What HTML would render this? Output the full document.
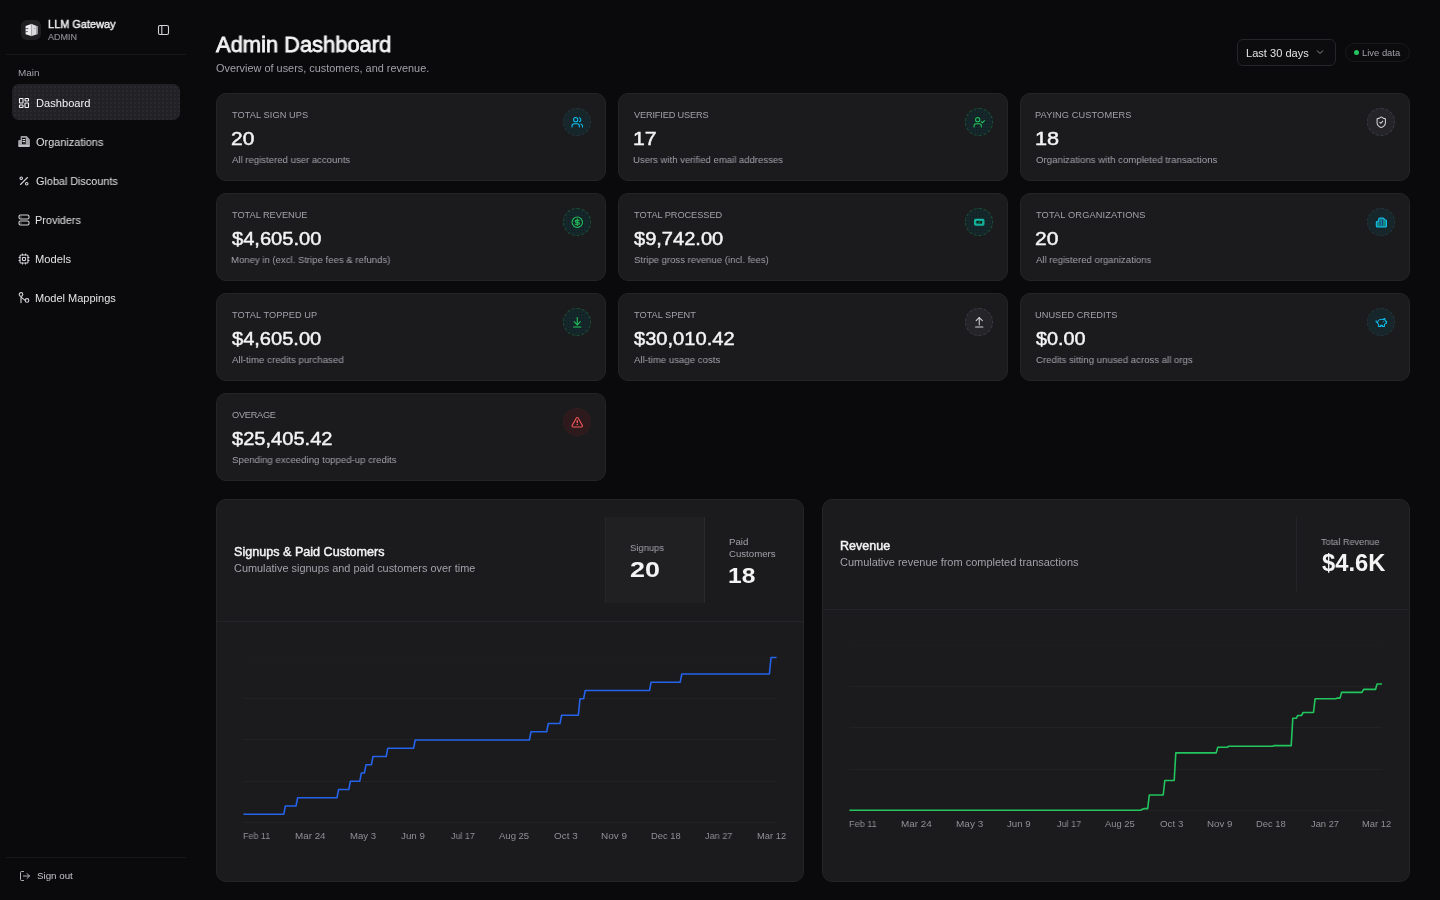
<!DOCTYPE html>
<html><head><meta charset="utf-8"><title>Admin Dashboard</title>
<style>
*{box-sizing:border-box;margin:0;padding:0}
html,body{width:1440px;height:900px;overflow:hidden;background:#0a0a0c;font-family:"Liberation Sans",sans-serif}
.t{position:absolute;white-space:nowrap;line-height:1;transform-origin:0 0;will-change:transform}
.abs{position:absolute}
.card{position:absolute;width:390px;height:88px;background:#1b1b1d;border:1px solid #242427;border-radius:10px}
.ic{position:absolute;width:28px;height:28px;border-radius:50%;display:flex;align-items:center;justify-content:center}
.ic svg{width:12.5px;height:12.5px}
.ic.teal{background:#16262a;border:1px dashed #27353c}
.ic.green{background-color:#15272a;background-image:radial-gradient(circle,#0f1c1e 0.6px,transparent 0.8px);background-size:3px 3px;border:1px dashed #1c5234}
.ic.gray{background:#252529;border:1px dashed #363c4a}
.ic.red{background:#2e1a1d;border:1px dashed #33201f}
.chart{position:absolute;background:#1b1b1d;border:1px solid #242427;border-radius:10px;overflow:hidden}
</style></head><body>
<!-- sidebar -->
<div class="abs" style="left:21px;top:20px;width:20px;height:20px;border-radius:6px;background:#1f1f22"></div>
<svg class="abs" style="left:24px;top:22px" width="16" height="16" viewBox="24 22 16 16">
<path d="M25.6 26.0 L31.2 23.9 L31.2 36.1 L25.6 34.3Z" fill="#ededef"/>
<path d="M31.9 24.1 L37.7 26.4 L37.7 33.9 L31.9 36.1Z" fill="#dcdce0"/>
<path d="M36.2 25.8 L37.7 26.4 L37.7 33.9 L36.2 34.5Z" fill="#8e8e94"/>
<rect x="30.9" y="23.9" width="1.2" height="12.2" fill="#a9a9ae"/>
<path d="M25.6 28.6h2.8M25.6 31.6h2.2" stroke="#3a3a3f" stroke-width="0.8"/>
<path d="M34.2 28.4h1" stroke="#6a6a70" stroke-width="0.8"/>
</svg>
<svg class="abs" style="left:157px;top:24px" width="13" height="12" viewBox="0 0 13 12"><rect x="1.5" y="1.5" width="10" height="9" rx="1.5" fill="none" stroke="#d4d4d8" stroke-width="1.1"/><path d="M4.8 1.5v9" stroke="#d4d4d8" stroke-width="1.1"/></svg>
<div class="abs" style="left:6px;top:54px;width:180px;height:1px;background:#18181b"></div>
<div class="abs" style="left:12px;top:84px;width:168px;height:36px;border-radius:7px;background:#222226;background-image:radial-gradient(circle,#2a2a2e 0.7px,transparent 0.9px);background-size:4px 4px;background-position:1px 1px"></div>
<div class="abs" style="left:6px;top:857px;width:180px;height:1px;background:#18181b"></div>
<svg class="abs" style="left:18px;top:96.5px" width="12" height="12" viewBox="0 0 24 24" fill="none" stroke="#f4f4f5" stroke-width="2.2" stroke-linecap="round" stroke-linejoin="round"><rect width="7" height="9" x="3" y="3" rx="1"/><rect width="7" height="5" x="14" y="3" rx="1"/><rect width="7" height="9" x="14" y="12" rx="1"/><rect width="7" height="5" x="3" y="16" rx="1"/></svg>
<svg class="abs" style="left:14px;top:130px" width="20" height="20" viewBox="14 130 20 20"><path d="M18.2 141.2 Q18.2 140.1 19.3 140.1 L20.6 140.1 L20.6 137.2 Q20.6 136 21.8 136 L26.6 136 L29.3 138.8 Q29.9 139.4 29.9 140.3 L29.9 145.8 Q29.9 147 28.7 147 L19.4 147 Q18.2 147 18.2 145.8Z" fill="#a3a3a9"/><rect x="22" y="137.7" width="3.7" height="6.5" fill="#0a0a0c"/><path d="M22.5 139.6h2.7M22.5 141.6h2.7" stroke="#f4f4f5" stroke-width="1"/><path d="M23.6 143.2h0.8" stroke="#a3a3a9" stroke-width="1"/><path d="M18.6 145.9h10.9" stroke="#d0d0d5" stroke-width="1.2"/></svg>
<svg class="abs" style="left:18px;top:174.5px" width="12" height="12" viewBox="0 0 24 24" fill="none" stroke="#d4d4d8" stroke-width="2.2" stroke-linecap="round" stroke-linejoin="round"><line x1="19" x2="5" y1="5" y2="19"/><circle cx="6.5" cy="6.5" r="2.5"/><circle cx="17.5" cy="17.5" r="2.5"/></svg>
<svg class="abs" style="left:18px;top:213.5px" width="12" height="12" viewBox="0 0 24 24" fill="none" stroke="#d4d4d8" stroke-width="2.2" stroke-linecap="round" stroke-linejoin="round"><rect width="20" height="8" x="2" y="2" rx="3"/><rect width="20" height="8" x="2" y="14" rx="3"/><path d="M6 6h.01M6 18h.01"/></svg>
<svg class="abs" style="left:18px;top:252.5px" width="12" height="12" viewBox="0 0 24 24" fill="none" stroke="#d4d4d8" stroke-width="2.2" stroke-linecap="round" stroke-linejoin="round"><rect width="16" height="16" x="4" y="4" rx="2"/><rect width="6" height="6" x="9" y="9" rx="1"/><path d="M15 2v2M15 20v2M2 15h2M2 9h2M20 15h2M20 9h2M9 2v2M9 20v2"/></svg>
<svg class="abs" style="left:18px;top:291px" width="12" height="14" viewBox="0 0 12 14" fill="none" stroke="#d4d4d8" stroke-width="1.1" stroke-linecap="round"><circle cx="3" cy="3.4" r="1.8"/><path d="M3 5.2V11.6M3.6 6.6 L7.3 9.4"/><circle cx="9" cy="9.4" r="1.8"/></svg>
<svg class="abs" style="left:19px;top:870px" width="12" height="12" viewBox="0 0 24 24" fill="none" stroke="#b4b4ba" stroke-width="2.0" stroke-linecap="round" stroke-linejoin="round"><path d="M9 21H5a2 2 0 0 1-2-2V5a2 2 0 0 1 2-2h4"/><polyline points="16 17 21 12 16 7"/><line x1="21" x2="9" y1="12" y2="12"/></svg>
<div class="card" style="left:216px;top:93px"></div>
<div class="ic teal" style="left:563px;top:108px"><svg viewBox="0 0 24 24" fill="none" stroke="#10c2f4" stroke-width="2" stroke-linecap="round" stroke-linejoin="round"><path d="M16 21v-2a4 4 0 0 0-4-4H6a4 4 0 0 0-4 4v2"/><circle cx="9" cy="7" r="4"/><path d="M22 21v-2a4 4 0 0 0-3-3.87"/><path d="M16 3.13a4 4 0 0 1 0 7.75"/></svg></div>
<div class="card" style="left:618px;top:93px"></div>
<div class="ic green" style="left:965px;top:108px"><svg viewBox="0 0 24 24" fill="none" stroke="#22c55e" stroke-width="2" stroke-linecap="round" stroke-linejoin="round"><path d="M16 21v-2a4 4 0 0 0-4-4H6a4 4 0 0 0-4 4v2"/><circle cx="9" cy="7" r="4"/><polyline points="16 11 18 13 22 9"/></svg></div>
<div class="card" style="left:1020px;top:93px"></div>
<div class="ic gray" style="left:1367px;top:108px"><svg viewBox="0 0 24 24" fill="none" stroke="#d4d4d8" stroke-width="2" stroke-linecap="round" stroke-linejoin="round"><path d="M20 13c0 5-3.5 7.5-7.66 8.95a1 1 0 0 1-.67-.01C7.5 20.5 4 18 4 13V6a1 1 0 0 1 1-1c2 0 4.5-1.2 6.24-2.72a1.17 1.17 0 0 1 1.52 0C14.51 3.81 17 5 19 5a1 1 0 0 1 1 1z"/><path d="m9 12 2 2 4-4"/></svg></div>
<div class="card" style="left:216px;top:193px"></div>
<div class="ic green" style="left:563px;top:208px"><svg viewBox="0 0 24 24" fill="none" stroke="#22c55e" stroke-width="2" stroke-linecap="round" stroke-linejoin="round"><circle cx="12" cy="12" r="10"/><path d="M16 8h-6a2 2 0 1 0 0 4h4a2 2 0 1 1 0 4H8"/><path d="M12 18V6"/></svg></div>
<div class="card" style="left:618px;top:193px"></div>
<div class="ic green" style="left:965px;top:208px"><svg viewBox="0 0 24 24" fill="none" stroke="#14b8a6" stroke-width="2" stroke-linecap="round" stroke-linejoin="round"><rect width="18" height="11" x="3" y="6.5" rx="2" fill="#13a596" stroke="#14b8a6" stroke-width="2"/><rect width="11" height="5" x="6.5" y="9.5" fill="#0c1a18" stroke="none"/><path d="M10.5 13.5l3-3" stroke="#22c55e" stroke-width="1.5"/><path d="M5 8.5h.01M19 15.5h.01M5 15.5h.01" stroke="#22c55e" stroke-width="2"/></svg></div>
<div class="card" style="left:1020px;top:193px"></div>
<div class="ic teal" style="left:1367px;top:208px"><svg viewBox="0 0 24 24" fill="none" stroke="#10c2f4" stroke-width="2" stroke-linecap="round" stroke-linejoin="round"><path d="M2.5 12a2 2 0 0 1 2-2H7V6a2 2 0 0 1 2-2h7l4 3.5h.5a1.5 1.5 0 0 1 1.5 1.5V19a2 2 0 0 1-2 2H4.5a2 2 0 0 1-2-2z" fill="#138a84"/><path d="M10 7.5v10M14 7.5v10" stroke="#1e3a8a" stroke-width="2.5"/><path d="M11.8 8v9" stroke="#14b8a6" stroke-width="1.5"/></svg></div>
<div class="card" style="left:216px;top:293px"></div>
<div class="ic green" style="left:563px;top:308px"><svg viewBox="0 0 24 24" fill="none" stroke="#22c55e" stroke-width="2" stroke-linecap="round" stroke-linejoin="round"><path d="M12 17V3"/><path d="m6 11 6 6 6-6"/><path d="M19 21H5"/></svg></div>
<div class="card" style="left:618px;top:293px"></div>
<div class="ic gray" style="left:965px;top:308px"><svg viewBox="0 0 24 24" fill="none" stroke="#d4d4d8" stroke-width="2" stroke-linecap="round" stroke-linejoin="round"><path d="m18 9-6-6-6 6"/><path d="M12 3v14"/><path d="M5 21h14"/></svg></div>
<div class="card" style="left:1020px;top:293px"></div>
<div class="ic teal" style="left:1367px;top:308px"><svg viewBox="0 0 24 24" fill="none" stroke="#10c2f4" stroke-width="2" stroke-linecap="round" stroke-linejoin="round"><path d="M19 5c-1.5 0-2.8 1.4-3 2-3.5-1.5-11-.3-11 5 0 1.8 0 3 2 4.5V20h4v-2h3v2h4v-4c1-.5 1.7-1 2-2h2v-4h-2c0-1-.5-1.5-1-2V5z"/><path d="M2 9v1c0 1.1.9 2 2 2h1"/><path d="M16 11h.01"/></svg></div>
<div class="card" style="left:216px;top:393px"></div>
<div class="ic red" style="left:563px;top:408px"><svg viewBox="0 0 24 24" fill="none" stroke="#f0585c" stroke-width="2" stroke-linecap="round" stroke-linejoin="round"><path d="m21.73 18-8-14a2 2 0 0 0-3.48 0l-8 14A2 2 0 0 0 4 21h16a2 2 0 0 0 1.73-3"/><path d="M12 9v3.5" stroke-width="2.8"/><path d="M12 16.5h.01" stroke-width="2.8"/></svg></div>
<div class="chart" style="left:216px;top:499px;width:588px;height:383px"></div>
<div class="abs" style="left:217px;top:621px;width:586px;height:1px;background:#252529"></div>
<div class="abs" style="left:605px;top:517px;width:100px;height:86px;background:#202023;border-left:1px solid #262629;border-right:1px solid #29292c"></div>
<div class="chart" style="left:822px;top:499px;width:588px;height:383px"></div>
<div class="abs" style="left:823px;top:609px;width:586px;height:1px;background:#252529"></div>
<div class="abs" style="left:1296px;top:517px;width:1px;height:74px;background:#252529"></div>
<svg class="abs" style="left:0;top:0" width="1440" height="900"><g stroke="#222225" stroke-width="1"><line x1="243" x2="776.6" y1="657.5" y2="657.5" stroke="#1d1d20"/><line x1="243" x2="776.6" y1="698.5" y2="698.5"/><line x1="243" x2="776.6" y1="739.5" y2="739.5"/><line x1="243" x2="776.6" y1="781.5" y2="781.5"/><line x1="243" x2="776.6" y1="822.5" y2="822.5"/><line x1="849.4" x2="1382.4" y1="645.5" y2="645.5" stroke="#1d1d20"/><line x1="849.4" x2="1382.4" y1="686.5" y2="686.5"/><line x1="849.4" x2="1382.4" y1="727.5" y2="727.5"/><line x1="849.4" x2="1382.4" y1="769.5" y2="769.5"/><line x1="849.4" x2="1382.4" y1="810.5" y2="810.5"/></g><path d="M243.4,814.2 L283.8,814.2 L285.4,806.0 L296.0,806.0 L297.6,797.8 L337.0,797.8 L338.6,789.5 L348.8,789.5 L350.4,781.2 L359.8,781.2 L361.4,773.0 L364.4,773.0 L366.0,764.8 L371.4,764.8 L373.0,756.5 L386.2,756.5 L387.8,748.2 L413.6,748.2 L415.2,740.0 L529.4,740.0 L531.0,731.8 L546.7,731.8 L548.3,723.5 L560.0,723.5 L561.6,715.2 L578.4,715.2 L580.0,698.8 L583.6,698.8 L585.2,690.5 L649.5,690.5 L651.1,682.2 L680.2,682.2 L681.8,674.0 L769.4,674.0 L771.0,657.5 L776.6,657.5" fill="none" stroke="#2563eb" stroke-width="1.6" stroke-linejoin="round"/><path d="M849.4,810.3 L1140.7,810.3 L1142.3,809.3 L1142.7,809.3 L1144.3,808.6 L1147.7,808.6 L1149.3,795.0 L1163.2,795.0 L1164.8,780.5 L1174.2,780.5 L1175.8,752.9 L1216.2,752.9 L1217.8,747.2 L1227.2,747.2 L1228.8,746.3 L1272.7,746.3 L1274.3,745.6 L1291.2,745.6 L1292.8,718.3 L1296.2,718.3 L1297.8,715.5 L1301.5,715.5 L1303.1,712.5 L1313.5,712.5 L1315.1,698.8 L1335.7,698.8 L1337.3,698.1 L1340.0,698.1 L1341.6,692.4 L1362.0,692.4 L1363.6,689.4 L1375.5,689.4 L1377.1,684.0 L1382.0,684.0" fill="none" stroke="#22c55e" stroke-width="1.6" stroke-linejoin="round"/></svg>
<!-- header controls -->
<div class="abs" style="left:1237px;top:39px;width:99px;height:27px;border:1px solid #25252a;border-radius:6px;background:#0c0c0e"></div>
<svg class="abs" style="left:1315px;top:48px" width="10" height="8" viewBox="0 0 10 8"><path d="M2 2.5l3 3 3-3" fill="none" stroke="#8f8f96" stroke-width="1"/></svg>
<div class="abs" style="left:1345px;top:43px;width:65px;height:19px;border:1px solid #19191c;border-radius:10px;background:#0b0b0d"></div>
<div class="abs" style="left:1354px;top:50px;width:5px;height:5px;border-radius:50%;background:#22c55e"></div>
<div class="t" style="left:47.84px;top:19px;font-size:11.17px;font-weight:400;color:#f4f4f5;transform:scaleX(0.9815);-webkit-text-stroke:0.40px #f4f4f5">LLM Gateway</div>
<div class="t" style="left:48.00px;top:33px;font-size:8.38px;font-weight:400;color:#85858c;transform:scaleX(1.0715);-webkit-text-stroke:0.21px #85858c">ADMIN</div>
<div class="t" style="left:17.72px;top:69px;font-size:8.94px;font-weight:400;color:#a1a1aa;transform:scaleX(1.1115)">Main</div>
<div class="t" style="left:35.63px;top:98px;font-size:11.03px;font-weight:400;color:#f4f4f5;transform:scaleX(1.0096)">Dashboard</div>
<div class="t" style="left:35.79px;top:137px;font-size:11.03px;font-weight:400;color:#e4e4e7;transform:scaleX(0.9909)">Organizations</div>
<div class="t" style="left:35.79px;top:176px;font-size:11.03px;font-weight:400;color:#e4e4e7;transform:scaleX(0.9813)">Global Discounts</div>
<div class="t" style="left:35.45px;top:215px;font-size:11.03px;font-weight:400;color:#e4e4e7;transform:scaleX(0.9869)">Providers</div>
<div class="t" style="left:35.43px;top:254px;font-size:11.03px;font-weight:400;color:#e4e4e7;transform:scaleX(1.0128)">Models</div>
<div class="t" style="left:35.44px;top:293px;font-size:11.03px;font-weight:400;color:#e4e4e7;transform:scaleX(0.9994)">Model Mappings</div>
<div class="t" style="left:37.20px;top:871px;font-size:9.78px;font-weight:400;color:#c4c4c9;transform:scaleX(0.9971)">Sign out</div>
<div class="t" style="left:216.25px;top:34px;font-size:22.35px;font-weight:400;color:#f4f4f5;transform:scaleX(0.9794);-webkit-text-stroke:0.80px #f4f4f5">Admin Dashboard</div>
<div class="t" style="left:215.74px;top:63px;font-size:10.75px;font-weight:400;color:#a1a1aa;transform:scaleX(1.0140)">Overview of users, customers, and revenue.</div>
<div class="t" style="left:1245.83px;top:49px;font-size:10.34px;font-weight:400;color:#e4e4e7;transform:scaleX(1.0718)">Last 30 days</div>
<div class="t" style="left:1361.66px;top:49px;font-size:8.94px;font-weight:400;color:#a1a1aa;transform:scaleX(1.0551)">Live data</div>
<div class="t" style="left:234.31px;top:547px;font-size:11.87px;font-weight:400;color:#f4f4f5;transform:scaleX(1.0615);-webkit-text-stroke:0.43px #f4f4f5">Signups &amp; Paid Customers</div>
<div class="t" style="left:234.19px;top:563px;font-size:10.61px;font-weight:400;color:#a1a1aa;transform:scaleX(1.0283)">Cumulative signups and paid customers over time</div>
<div class="t" style="left:630.21px;top:543px;font-size:9.64px;font-weight:400;color:#a1a1aa;transform:scaleX(0.9789)">Signups</div>
<div class="t" style="left:629.66px;top:559px;font-size:22.35px;font-weight:700;color:#f4f4f5;transform:scaleX(1.2042)">20</div>
<div class="t" style="left:728.56px;top:537px;font-size:9.64px;font-weight:400;color:#a1a1aa;transform:scaleX(0.9837)">Paid</div>
<div class="t" style="left:728.85px;top:549px;font-size:9.64px;font-weight:400;color:#a1a1aa;transform:scaleX(0.9970)">Customers</div>
<div class="t" style="left:727.76px;top:565px;font-size:22.35px;font-weight:700;color:#f4f4f5;transform:scaleX(1.1003)">18</div>
<div class="t" style="left:839.72px;top:541px;font-size:11.87px;font-weight:400;color:#f4f4f5;transform:scaleX(1.0561);-webkit-text-stroke:0.43px #f4f4f5">Revenue</div>
<div class="t" style="left:840.19px;top:557px;font-size:10.61px;font-weight:400;color:#a1a1aa;transform:scaleX(1.0346)">Cumulative revenue from completed transactions</div>
<div class="t" style="left:1321.36px;top:537px;font-size:9.64px;font-weight:400;color:#a1a1aa;transform:scaleX(0.9514)">Total Revenue</div>
<div class="t" style="left:1321.50px;top:552px;font-size:23.04px;font-weight:700;color:#f4f4f5;transform:scaleX(1.0307)">$4.6K</div>
<div class="t" style="left:231.86px;top:111px;font-size:9.22px;letter-spacing:0.082px;font-weight:400;color:#a1a1aa">TOTAL SIGN UPS</div>
<div class="t" style="left:231.02px;top:130px;font-size:18.02px;font-weight:400;color:#f4f4f5;transform:scaleX(1.1629);-webkit-text-stroke:0.45px #f4f4f5">20</div>
<div class="t" style="left:232.00px;top:155px;font-size:9.78px;font-weight:400;color:#a1a1aa;transform:scaleX(0.9806)">All registered user accounts</div>
<div class="t" style="left:634.00px;top:111px;font-size:9.22px;letter-spacing:-0.165px;font-weight:400;color:#a1a1aa">VERIFIED USERS</div>
<div class="t" style="left:632.67px;top:130px;font-size:18.02px;font-weight:400;color:#f4f4f5;transform:scaleX(1.1769);-webkit-text-stroke:0.45px #f4f4f5">17</div>
<div class="t" style="left:633.40px;top:155px;font-size:9.78px;font-weight:400;color:#a1a1aa;transform:scaleX(0.9761)">Users with verified email addresses</div>
<div class="t" style="left:1035.28px;top:111px;font-size:9.22px;letter-spacing:0.104px;font-weight:400;color:#a1a1aa">PAYING CUSTOMERS</div>
<div class="t" style="left:1034.64px;top:130px;font-size:18.02px;font-weight:400;color:#f4f4f5;transform:scaleX(1.2044);-webkit-text-stroke:0.45px #f4f4f5">18</div>
<div class="t" style="left:1035.55px;top:155px;font-size:9.78px;font-weight:400;color:#a1a1aa;transform:scaleX(0.9885)">Organizations with completed transactions</div>
<div class="t" style="left:231.86px;top:211px;font-size:9.22px;letter-spacing:-0.017px;font-weight:400;color:#a1a1aa">TOTAL REVENUE</div>
<div class="t" style="left:232.00px;top:230px;font-size:18.02px;font-weight:400;color:#f4f4f5;transform:scaleX(1.1154);-webkit-text-stroke:0.45px #f4f4f5">$4,605.00</div>
<div class="t" style="left:231.25px;top:255px;font-size:9.78px;font-weight:400;color:#a1a1aa;transform:scaleX(0.9787)">Money in (excl. Stripe fees &amp; refunds)</div>
<div class="t" style="left:633.86px;top:211px;font-size:9.22px;letter-spacing:-0.060px;font-weight:400;color:#a1a1aa">TOTAL PROCESSED</div>
<div class="t" style="left:634.00px;top:230px;font-size:18.02px;font-weight:400;color:#f4f4f5;transform:scaleX(1.1129);-webkit-text-stroke:0.45px #f4f4f5">$9,742.00</div>
<div class="t" style="left:633.70px;top:255px;font-size:9.78px;font-weight:400;color:#a1a1aa;transform:scaleX(0.9781)">Stripe gross revenue (incl. fees)</div>
<div class="t" style="left:1035.86px;top:211px;font-size:9.22px;letter-spacing:0.155px;font-weight:400;color:#a1a1aa">TOTAL ORGANIZATIONS</div>
<div class="t" style="left:1035.01px;top:230px;font-size:18.02px;font-weight:400;color:#f4f4f5;transform:scaleX(1.1682);-webkit-text-stroke:0.45px #f4f4f5">20</div>
<div class="t" style="left:1036.00px;top:255px;font-size:9.78px;font-weight:400;color:#a1a1aa;transform:scaleX(0.9786)">All registered organizations</div>
<div class="t" style="left:231.86px;top:311px;font-size:9.22px;letter-spacing:0.087px;font-weight:400;color:#a1a1aa">TOTAL TOPPED UP</div>
<div class="t" style="left:232.00px;top:330px;font-size:18.02px;font-weight:400;color:#f4f4f5;transform:scaleX(1.1129);-webkit-text-stroke:0.45px #f4f4f5">$4,605.00</div>
<div class="t" style="left:232.00px;top:355px;font-size:9.78px;font-weight:400;color:#a1a1aa;transform:scaleX(0.9944)">All-time credits purchased</div>
<div class="t" style="left:633.86px;top:311px;font-size:9.22px;letter-spacing:0.005px;font-weight:400;color:#a1a1aa">TOTAL SPENT</div>
<div class="t" style="left:634.00px;top:330px;font-size:18.02px;font-weight:400;color:#f4f4f5;transform:scaleX(1.1158);-webkit-text-stroke:0.45px #f4f4f5">$30,010.42</div>
<div class="t" style="left:634.00px;top:355px;font-size:9.78px;font-weight:400;color:#a1a1aa;transform:scaleX(0.9877)">All-time usage costs</div>
<div class="t" style="left:1035.42px;top:311px;font-size:9.22px;letter-spacing:0.040px;font-weight:400;color:#a1a1aa">UNUSED CREDITS</div>
<div class="t" style="left:1036.00px;top:330px;font-size:18.02px;font-weight:400;color:#f4f4f5;transform:scaleX(1.1000);-webkit-text-stroke:0.45px #f4f4f5">$0.00</div>
<div class="t" style="left:1035.55px;top:355px;font-size:9.78px;font-weight:400;color:#a1a1aa;transform:scaleX(0.9818)">Credits sitting unused across all orgs</div>
<div class="t" style="left:231.57px;top:411px;font-size:9.22px;letter-spacing:-0.262px;font-weight:400;color:#a1a1aa">OVERAGE</div>
<div class="t" style="left:232.00px;top:430px;font-size:18.02px;font-weight:400;color:#f4f4f5;transform:scaleX(1.1147);-webkit-text-stroke:0.45px #f4f4f5">$25,405.42</div>
<div class="t" style="left:231.70px;top:455px;font-size:9.78px;font-weight:400;color:#a1a1aa;transform:scaleX(0.9871)">Spending exceeding topped-up credits</div>
<div class="t" style="left:242.80px;top:832px;font-size:9.36px;font-weight:400;color:#8f8f96;transform:scaleX(0.9551)">Feb 11</div>
<div class="t" style="left:294.83px;top:832px;font-size:9.36px;font-weight:400;color:#8f8f96;transform:scaleX(1.0512)">Mar 24</div>
<div class="t" style="left:350.05px;top:832px;font-size:9.36px;font-weight:400;color:#8f8f96;transform:scaleX(1.0258)">May 3</div>
<div class="t" style="left:400.65px;top:832px;font-size:9.36px;font-weight:400;color:#8f8f96;transform:scaleX(1.0463)">Jun 9</div>
<div class="t" style="left:450.66px;top:832px;font-size:9.36px;font-weight:400;color:#8f8f96;transform:scaleX(0.9573)">Jul 17</div>
<div class="t" style="left:499.00px;top:832px;font-size:9.36px;font-weight:400;color:#8f8f96;transform:scaleX(1.0178)">Aug 25</div>
<div class="t" style="left:553.54px;top:832px;font-size:9.36px;font-weight:400;color:#8f8f96;transform:scaleX(1.0583)">Oct 3</div>
<div class="t" style="left:600.72px;top:832px;font-size:9.36px;font-weight:400;color:#8f8f96;transform:scaleX(1.0628)">Nov 9</div>
<div class="t" style="left:650.77px;top:832px;font-size:9.36px;font-weight:400;color:#8f8f96;transform:scaleX(0.9952)">Dec 18</div>
<div class="t" style="left:705.16px;top:832px;font-size:9.36px;font-weight:400;color:#8f8f96;transform:scaleX(0.9757)">Jan 27</div>
<div class="t" style="left:756.68px;top:832px;font-size:9.36px;font-weight:400;color:#8f8f96;transform:scaleX(0.9853)">Mar 12</div>
<div class="t" style="left:848.69px;top:820px;font-size:9.36px;font-weight:400;color:#8f8f96;transform:scaleX(0.9734)">Feb 11</div>
<div class="t" style="left:900.82px;top:820px;font-size:9.36px;font-weight:400;color:#8f8f96;transform:scaleX(1.0618)">Mar 24</div>
<div class="t" style="left:955.72px;top:820px;font-size:9.36px;font-weight:400;color:#8f8f96;transform:scaleX(1.0709)">May 3</div>
<div class="t" style="left:1006.65px;top:820px;font-size:9.36px;font-weight:400;color:#8f8f96;transform:scaleX(1.0373)">Jun 9</div>
<div class="t" style="left:1056.56px;top:820px;font-size:9.36px;font-weight:400;color:#8f8f96;transform:scaleX(0.9695)">Jul 17</div>
<div class="t" style="left:1105.10px;top:820px;font-size:9.36px;font-weight:400;color:#8f8f96;transform:scaleX(1.0042)">Aug 25</div>
<div class="t" style="left:1159.54px;top:820px;font-size:9.36px;font-weight:400;color:#8f8f96;transform:scaleX(1.0444)">Oct 3</div>
<div class="t" style="left:1207.04px;top:820px;font-size:9.36px;font-weight:400;color:#8f8f96;transform:scaleX(1.0414)">Nov 9</div>
<div class="t" style="left:1256.47px;top:820px;font-size:9.36px;font-weight:400;color:#8f8f96;transform:scaleX(1.0022)">Dec 18</div>
<div class="t" style="left:1310.65px;top:820px;font-size:9.36px;font-weight:400;color:#8f8f96;transform:scaleX(0.9938)">Jan 27</div>
<div class="t" style="left:1362.48px;top:820px;font-size:9.36px;font-weight:400;color:#8f8f96;transform:scaleX(0.9853)">Mar 12</div>
</body></html>
